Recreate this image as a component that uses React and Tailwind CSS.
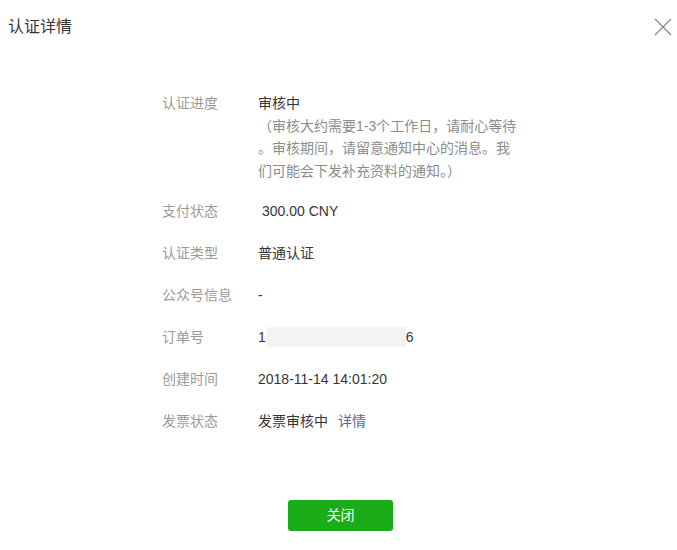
import React from "react";

const FONT = {
	fontFamily: '"Liberation Sans", "Noto Sans CJK SC", sans-serif',
};

const rows = [
	{ label: "支付状态", value: <span className="pl-[4px]">300.00 CNY</span> },
	{ label: "认证类型", value: "普通认证" },
	{ label: "公众号信息", value: "-" },
	{
		label: "订单号",
		value: (
			<span className="flex items-center">
				<span>1</span>
				<span className="inline-block w-[139px] h-[20px] bg-[#f3f3f3] ml-[1px]"></span>
				<span>6</span>
			</span>
		),
	},
	{ label: "创建时间", value: "2018-11-14 14:01:20" },
	{
		label: "发票状态",
		value: (
			<span>
				发票审核中
				<span className="text-[#576b95] ml-[10px] cursor-pointer">详情</span>
			</span>
		),
	},
];

const App = () => {
	return (
		<div
			className="w-[677px] h-[550px] bg-white text-[#353535] relative"
			style={FONT}>
			<div className="flex justify-between items-center pl-[8px] pr-[4px] pt-[16px]">
				<h1 className="text-[16px] leading-[22px]">认证详情</h1>
				<button className="w-[20px] h-[22px] flex items-center justify-center">
					<svg width="18" height="18" viewBox="0 0 18 18">
						<path
							d="M1 1L17 17M17 1L1 17"
							stroke="#8a8a8a"
							strokeWidth="1.3"
							fill="none"
						/>
					</svg>
				</button>
			</div>

			<div className="pl-[162px] pt-[54px] text-[14px]">
				<div className="flex leading-[22.5px]">
					<div className="w-[96px] text-[#9a9a9a]">认证进度</div>
					<div className="whitespace-nowrap">
						<div>审核中</div>
						<div className="text-[#8c8c8c]">
							（审核大约需要1-3个工作日，请耐心等待
							<br />
							。审核期间，请留意通知中心的消息。我
							<br />
							们可能会下发补充资料的通知。）
						</div>
					</div>
				</div>

				{rows.map((row, i) => (
					<div
						key={row.label}
						className={`flex items-center leading-[22px] ${i === 0 ? "mt-[18px]" : "mt-[20px]"}`}>
						<div className="w-[96px] text-[#9a9a9a]">{row.label}</div>
						<div>{row.value}</div>
					</div>
				))}
			</div>

			<div className="flex justify-center pl-[4px] mt-[68px]">
				<button className="w-[105px] h-[31px] rounded-[3px] bg-[#1aad19] text-white text-[14px]">
					关闭
				</button>
			</div>
		</div>
	);
};

export default App;
